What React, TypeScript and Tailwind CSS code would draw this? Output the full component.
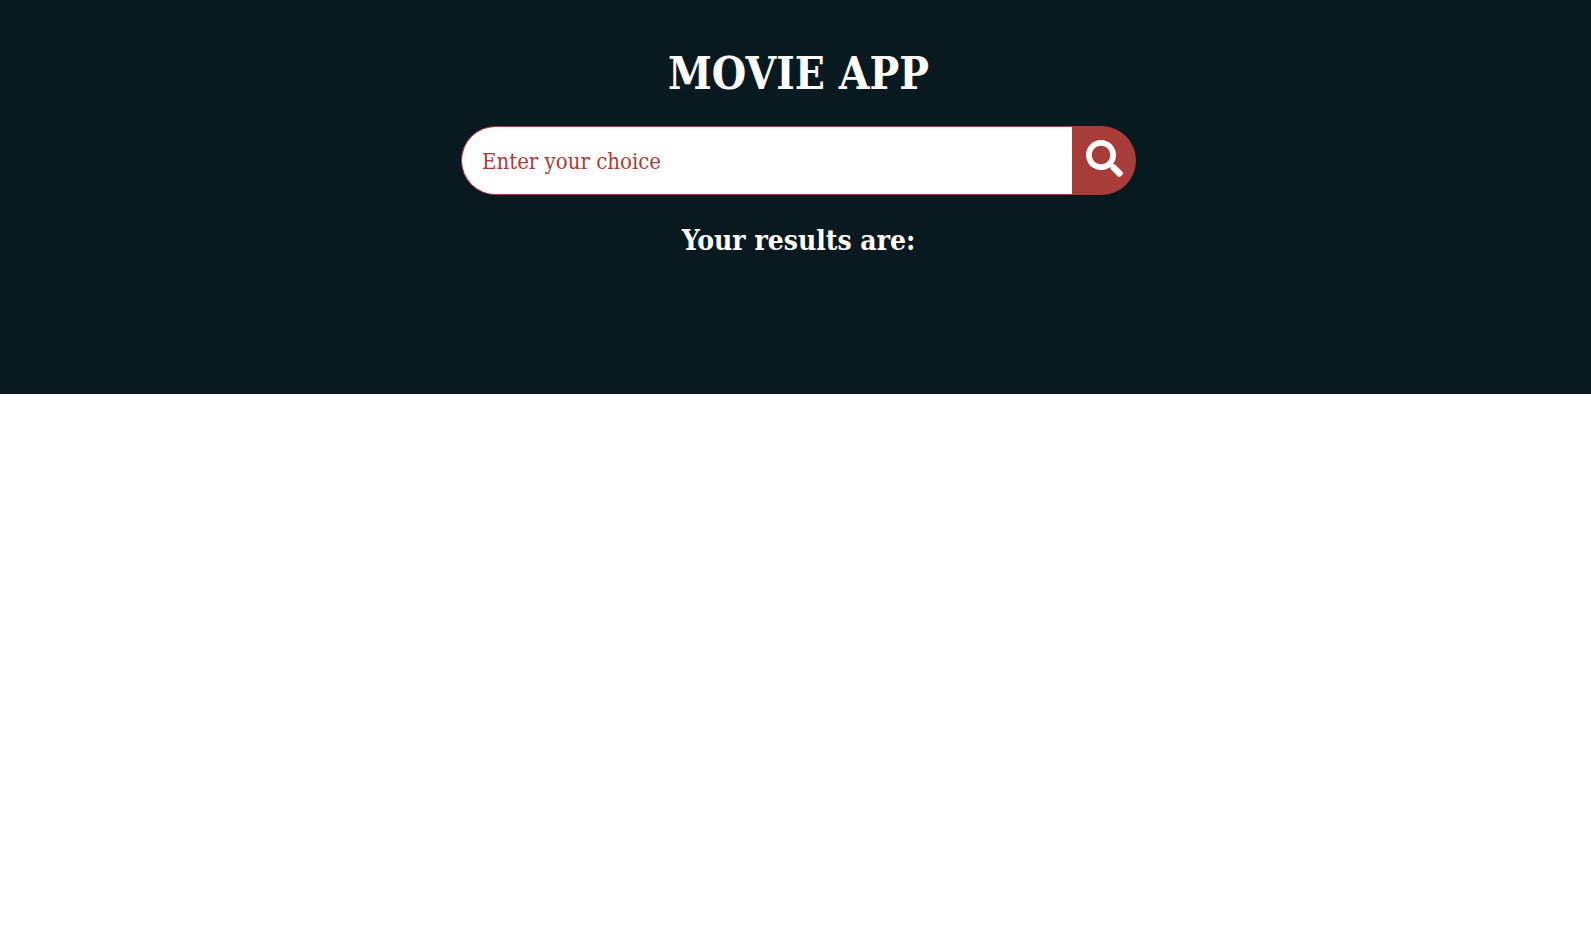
import { FaSearch } from "react-icons/fa";

export default function App() {
  return (
    <div className="min-h-screen bg-[#fefefe] font-['Roboto_Slab','DejaVu_Serif_Condensed','DejaVu_Serif',serif]">
      <main className="flex flex-col items-center bg-[#081920] pt-[42px] pr-4 pb-33 pl-[22px] text-white">
        <h1 className="text-[44px] leading-16 font-bold">MOVIE APP</h1>
        <form
          className="mt-5 flex h-[69px] w-full max-w-[675px]"
          onSubmit={(event) => event.preventDefault()}
        >
          <input
            type="text"
            aria-label="Search for a movie"
            placeholder="Enter your choice"
            className="min-w-0 flex-1 rounded-l-full border border-r-0 border-[#a83c38] bg-[#fefefe] px-5 pt-0.5 text-[22px] text-[#a83c38] outline-none placeholder:text-[#a83c38]"
          />
          <button
            type="submit"
            aria-label="Search"
            className="flex w-16 items-center justify-center rounded-r-full bg-[#a83c38] pb-1"
          >
            <FaSearch size={37} />
          </button>
        </form>
        <h2 className="mt-6 text-[28px] leading-[43px] font-bold">Your results are:</h2>
      </main>
    </div>
  );
}
